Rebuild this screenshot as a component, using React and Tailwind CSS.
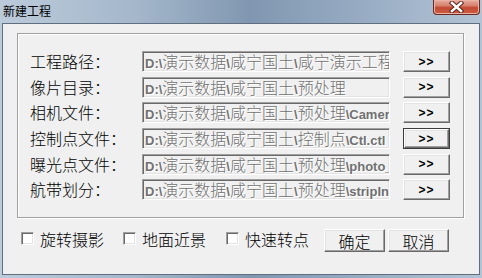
const rows = [
  ["工程路径：", "D:\\演示数据\\咸宁国土\\咸宁演示工程"],
  ["像片目录：", "D:\\演示数据\\咸宁国土\\预处理"],
  ["相机文件：", "D:\\演示数据\\咸宁国土\\预处理\\Camera.cam"],
  ["控制点文件：", "D:\\演示数据\\咸宁国土\\控制点\\Ctl.ctl"],
  ["曝光点文件：", "D:\\演示数据\\咸宁国土\\预处理\\photo_pos.txt"],
  ["航带划分：", "D:\\演示数据\\咸宁国土\\预处理\\stripInfo.txt"],
];

const checks = ["旋转摄影", "地面近景", "快速转点"];

// latin parts of a path are drawn in a small bold face, CJK in the 16px one
function PathText({ value }) {
  const parts = value.split(/([\x00-\x7f]+)/).filter(Boolean);
  return (
    <>
      {parts.map((p, i) =>
        /^[\x00-\x7f]+$/.test(p) ? (
          <span
            key={i}
            className="font-['Liberation_Sans',sans-serif] text-[13px] font-bold"
          >
            {p}
          </span>
        ) : (
          <span key={i}>{p}</span>
        )
      )}
    </>
  );
}

function RaisedButton({ children, isDefault, className }) {
  return (
    <div
      className={
        "flex items-center justify-center bg-[#f0f0f0] " +
        (isDefault ? "border border-[#3c3c3c] " : "") +
        className
      }
    >
      <div className="flex h-full w-full items-center justify-center border border-t-[#ffffff] border-l-[#ffffff] border-b-[#696969] border-r-[#696969] shadow-[inset_-1px_-1px_0_#a0a0a0,inset_1px_1px_0_#e3e3e3]">
        {children}
      </div>
    </div>
  );
}

export default function App() {
  return (
    <div className="flex h-[278px] w-[482px] flex-col bg-[linear-gradient(90deg,#bccbdb_0%,#a4b7cb_28%,#8197b1_52%,#98adc4_76%,#b3c3d5_100%)] font-['Noto_Sans_CJK_SC',sans-serif] font-light text-black">
      {/* title bar */}
      <div className="flex h-[23px] shrink-0 items-start justify-between">
        <div className="pl-[3px] pt-[3px] text-[12px] font-normal leading-[16px] text-black">
          新建工程
        </div>
        <div className="mr-[2px] flex h-[15px] w-[47px] items-center justify-center rounded-b-[4px] border border-t-0 border-[#6b2a20] bg-[linear-gradient(180deg,#e6ada0_0%,#d7826e_40%,#c24a33_55%,#cf5d43_100%)] shadow-[inset_0_0_0_1px_#eab2a4]">
          <svg width="15" height="12" viewBox="0 0 15 12">
            <path
              d="M3 2 L12 10 M12 2 L3 10"
              stroke="#5a1d14"
              strokeWidth="4.4"
              strokeLinecap="square"
            />
            <path
              d="M3 2 L12 10 M12 2 L3 10"
              stroke="#ffffff"
              strokeWidth="2.6"
              strokeLinecap="square"
            />
          </svg>
        </div>
      </div>

      {/* client area */}
      <div className="mx-[2px] mb-[3px] flex flex-1 flex-col border border-[#5f6f80] bg-[#f0f0f0]">
        {/* group box */}
        <div className="ml-[14px] mt-[9px] flex h-[185px] w-[447px] flex-col gap-[4.7px] border border-[#a0a0a0] pl-[12px] pt-[17px] shadow-[1px_1px_0_#ffffff,inset_1px_1px_0_#ffffff]">
          {rows.map(([label, value], idx) => (
            <div key={label} className="flex h-[21px] items-center">
              <div className="w-[112px] text-[16px] leading-[21px]">
                {label}
              </div>
              <div className="h-[21px] w-[248px] overflow-hidden whitespace-nowrap border border-t-[#a0a0a0] border-l-[#a0a0a0] border-b-[#ffffff] border-r-[#ffffff] bg-[#f0f0f0] pl-[2px] text-[16px] leading-[17px] text-[#707070] shadow-[inset_1px_1px_0_#696969,inset_-1px_-1px_0_#e3e3e3] [text-shadow:1px_1px_0_#ffffff]">
                <div className="pt-[1px]">
                  <PathText value={value} />
                </div>
              </div>
              <RaisedButton
                isDefault={idx === 3}
                className="ml-[13px] h-[21px] w-[47px]"
              >
                <span className="font-['Liberation_Sans',sans-serif] text-[12px] font-bold leading-none tracking-[1px]">
                  &gt;&gt;
                </span>
              </RaisedButton>
            </div>
          ))}
        </div>

        {/* bottom row */}
        <div className="ml-[18px] mt-[11px] flex h-[23px] items-center">
          {checks.map((c, i) => (
            <div
              key={c}
              className={
                "mb-[4px] flex items-center " +
                (i === 0 ? "" : i === 1 ? "ml-[19px]" : "ml-[20px]")
              }
            >
              <div className="h-[13px] w-[13px] border border-t-[#a0a0a0] border-l-[#a0a0a0] border-b-[#ffffff] border-r-[#ffffff] bg-white shadow-[inset_1px_1px_0_#696969,inset_-1px_-1px_0_#e3e3e3]" />
              <span className="ml-[6px] text-[16px] leading-[20px]">{c}</span>
            </div>
          ))}
          <RaisedButton className="ml-[15px] h-[23px] w-[61px]">
            <span className="text-[16px] leading-none">确定</span>
          </RaisedButton>
          <RaisedButton className="ml-[3px] h-[23px] w-[61px]">
            <span className="text-[16px] leading-none">取消</span>
          </RaisedButton>
        </div>
      </div>
    </div>
  );
}
